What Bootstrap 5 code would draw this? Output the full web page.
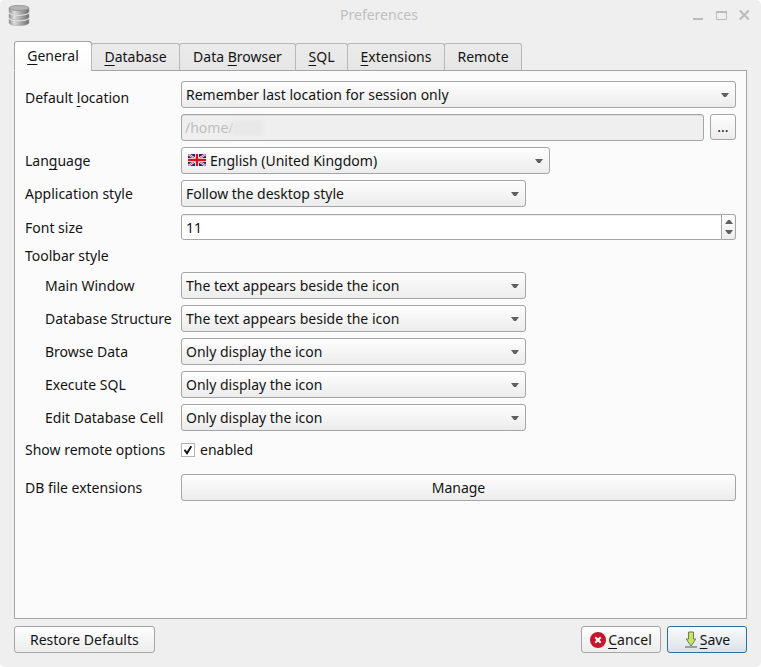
<!DOCTYPE html>
<html lang="en">
<head>
<meta charset="utf-8">
<meta name="viewport" content="width=device-width, initial-scale=1">
<title>Preferences</title>
<link href="https://cdn.jsdelivr.net/npm/bootstrap@5.3.0/dist/css/bootstrap.min.css" rel="stylesheet">
<style>
:root{--edge:#a5a5a5;--face:linear-gradient(#fefefe,#ececec);
 --arrow:url("data:image/svg+xml,%3Csvg xmlns='http://www.w3.org/2000/svg' viewBox='0 0 8 4'%3E%3Cpath d='M0 0h8L5 4H3z' fill='%23606060'/%3E%3C/svg%3E")}
body{background:#fff;color:#141414;font-family:"Noto Sans",sans-serif;font-size:14px;line-height:20px}
.window{background:#efefef;border-radius:5px}
.titlebar{height:41px;padding:5px 11px 0 8px;color:#c0c0c0}
.titlebar>*{flex:1 1 0}
.win-buttons{gap:12px}
.wbtn{border:0;background:none;padding:0;width:11px;height:20px;color:#bcbcbc}
.wbtn svg,.app-icon{display:block}
.frame{padding:0 14px 14px}
u{text-underline-offset:3px;text-decoration-thickness:1px;text-decoration-skip-ink:none}
.pref-tabs{border:0;height:30px;margin-bottom:-1px;position:relative}
.pref-tabs .nav-link{height:28px;padding:0;margin:0 0 0 -1px;border:1px solid #b8b8b8;border-bottom-color:var(--edge);border-radius:3px 3px 0 0;background:linear-gradient(#ebebeb,#e6e6e6);color:#141414}
.pref-tabs .nav-link.active{height:30px;margin:0;border-color:var(--edge);border-bottom-color:#fbfbfb;background:linear-gradient(#fff,#fbfbfb);color:#141414}
.w-general{width:78px}.w-database{width:89px}.w-browser{width:117px}.w-sql{width:53px}.w-ext{width:98px}.w-remote{width:78px}
.pane{background:#fbfbfb;border:1px solid var(--edge);padding:10px}
.stack{display:flex;flex-direction:column;gap:6px}
.line{display:grid;grid-template-columns:156px minmax(0,1fr);align-items:center;min-height:27px}
.line label,.line .caption{white-space:nowrap}
.sub>label{padding-left:20px}
.line-location{align-items:start}
.line-location>label{padding-top:7px}
.line-spin{align-items:end}
.line-spin>label{padding-bottom:2px}
.line-short{min-height:20px}
.line-check{min-height:25px;margin-bottom:6px}
.combo.form-select{height:27px;padding:0 24px 0 4px;border:1px solid var(--edge);border-radius:3px;font-size:14px;line-height:20px;color:#141414;background:var(--arrow) no-repeat right 6px center/8px 4px,var(--face)}
.combo-mid{max-width:345px}
.lang-box{max-width:369px}
.lang-box .combo{padding-left:28px}
.flag{position:absolute;left:7px;top:7px;width:18px;height:12px}
.field.form-control{height:26px;min-height:0;padding:0 4px;border:1px solid var(--edge);border-radius:3px;font-size:14px;line-height:20px;color:#141414;background:#fff;box-shadow:inset 0 1px #eee}
.field.path{height:27px;padding-left:3px;background:#efefef;color:#bebebe;box-shadow:inset 0 1px #dcdcdc}
.path-row,.footer-buttons{gap:6px}
.smudge{position:absolute;left:50px;top:7px;width:32px;height:14px;background:#e8e8e8;filter:blur(2px)}
.push.btn{height:27px;padding:0 15px;border:1px solid var(--edge);border-radius:3px;background:var(--face);font-size:14px;line-height:20px;color:#141414}
.push.btn.more{width:26px;height:26px;padding:0}
.push.btn.cancel{width:80px;padding:0}
.push.btn.save{width:80px;padding:0;border-color:#2a6f9e;background:linear-gradient(#f9fbfc,#dbe2e8)}
.footer-buttons{padding-top:7px}
.icon-text{margin-left:2px}
.spin .field{border-radius:3px 0 0 3px;appearance:textfield;-moz-appearance:textfield}
.spin .field::-webkit-inner-spin-button{appearance:none;margin:0}
.steps{width:14px;flex:none;border:1px solid var(--edge);border-left:0;border-radius:0 3px 3px 0;background:var(--face);padding:2px 0}
.steps button{flex:1;display:flex;align-items:center;justify-content:center;border:0;padding:0;background:none}
.tick.form-check-input{width:14px;height:14px;margin:0;border:1px solid #b3b3b3;border-radius:0;background-color:#fff}
.tick.form-check-input:checked{background:#fff url("data:image/svg+xml,%3Csvg xmlns='http://www.w3.org/2000/svg' viewBox='0 0 12 12'%3E%3Cpath d='M2.500 5.800 5 9.300 9.300 2.200' fill='none' stroke='%23111' stroke-width='1.900'/%3E%3C/svg%3E") center/12px 12px no-repeat;border-color:#b3b3b3}
.tick-label{padding-left:5px}
</style>
</head>
<body>
<main class="window min-vh-100 d-flex flex-column">
  <header class="titlebar d-flex align-items-start">
    <div>
      <svg class="app-icon" width="23" height="22" viewBox="0 0 23 22" aria-hidden="true">
        <defs><linearGradient id="metal"><stop offset="0" stop-color="#8c8c8c"/><stop offset=".25" stop-color="#dedede"/><stop offset=".6" stop-color="#a8a8a8"/><stop offset="1" stop-color="#6c6c6c"/></linearGradient></defs>
        <g fill="url(#metal)" stroke="#aaa" stroke-width=".6">
          <path d="M1 14v4c0 3.400 20 3.400 20 0v-4z"/>
          <path d="M1 8.500v4c0 3.400 20 3.400 20 0v-4z"/>
          <path d="M1 3v4c0 3.400 20 3.400 20 0V3z"/>
        </g>
        <path d="M1 8c2 3 18 3 20 0M1 13.500c2 3 18 3 20 0" fill="none" stroke="#e8e8e8"/>
        <ellipse cx="11" cy="3" rx="10" ry="2.600" fill="#b4b4b4" stroke="#8f8f8f" stroke-width=".8"/>
      </svg>
    </div>
    <div class="text-center">Preferences</div>
    <div class="win-buttons d-flex justify-content-end">
      <button class="wbtn" type="button" aria-label="Minimize"><svg width="11" height="20" viewBox="0 0 11 20"><path d="M0 13h10v2H0z" fill="currentColor"/></svg></button>
      <button class="wbtn" type="button" aria-label="Maximize"><svg width="11" height="20" viewBox="0 0 11 20"><path d="M.5 6.500h10v8H.5z" fill="none" stroke="currentColor"/><path d="M0 6h11v2H0z" fill="currentColor"/></svg></button>
      <button class="wbtn" type="button" aria-label="Close"><svg width="11" height="20" viewBox="0 0 11 20"><path d="m.8 5.500 9 9m0-9-9 9" stroke="currentColor" stroke-width="2.200"/></svg></button>
    </div>
  </header>
  <div class="frame flex-grow-1 d-flex flex-column">
    <ul class="nav nav-tabs pref-tabs align-items-end" role="tablist">
      <li role="presentation"><button type="button" role="tab" aria-selected="true" class="nav-link active w-general"><u>G</u>eneral</button></li>
      <li role="presentation"><button type="button" role="tab" class="nav-link w-database"><u>D</u>atabase</button></li>
      <li role="presentation"><button type="button" role="tab" class="nav-link w-browser">Data <u>B</u>rowser</button></li>
      <li role="presentation"><button type="button" role="tab" class="nav-link w-sql"><u>S</u>QL</button></li>
      <li role="presentation"><button type="button" role="tab" class="nav-link w-ext"><u>E</u>xtensions</button></li>
      <li role="presentation"><button type="button" role="tab" class="nav-link w-remote">Remote</button></li>
    </ul>
    <form class="pane flex-grow-1 stack" id="prefs">
      <div class="line line-location">
        <label for="loc">Default <u>l</u>ocation</label>
        <div class="stack">
          <select class="form-select combo" id="loc"><option>Remember last location for session only</option></select>
          <div class="path-row d-flex">
            <div class="position-relative flex-grow-1">
              <input class="form-control field path" type="text" value="/home/" aria-label="Default path" disabled>
              <span class="smudge"></span>
            </div>
            <button class="btn push more" type="button">...</button>
          </div>
        </div>
      </div>
      <div class="line">
        <label for="lang">Lan<u>g</u>uage</label>
        <div class="position-relative lang-box">
          <select class="form-select combo" id="lang"><option>English (United Kingdom)</option></select>
          <svg class="flag" viewBox="0 0 18 12" aria-hidden="true">
            <path d="M0 0h18v12H0z" fill="#23277d"/>
            <path d="m0 0 18 12M18 0 0 12" stroke="#fff" stroke-width="2.200"/>
            <path d="m0 0 18 12M18 0 0 12" stroke="#d22" stroke-width=".8"/>
            <path d="M9 0v12M0 6h18" stroke="#fff" stroke-width="4"/>
            <path d="M9 0v12M0 6h18" stroke="#d8101c" stroke-width="2.400"/>
          </svg>
        </div>
      </div>
      <div class="line">
        <label for="style">Application style</label>
        <select class="form-select combo combo-mid" id="style"><option>Follow the desktop style</option></select>
      </div>
      <div class="line line-spin">
        <label for="size">Font size</label>
        <div class="d-flex spin">
          <input class="form-control field" type="number" id="size" value="11">
          <div class="steps d-flex flex-column">
            <button type="button" aria-label="Increase"><svg width="8" height="4" viewBox="0 0 8 4"><path d="M0 4h8L5 0H3z" fill="#606060"/></svg></button>
            <button type="button" aria-label="Decrease"><svg width="8" height="4" viewBox="0 0 8 4"><path d="M0 0h8L5 4H3z" fill="#606060"/></svg></button>
          </div>
        </div>
      </div>
      <div class="line line-short"><span class="caption">Toolbar style</span></div>
      <div class="line sub">
        <label for="t1">Main Window</label>
        <select class="form-select combo combo-mid" id="t1"><option>The text appears beside the icon</option></select>
      </div>
      <div class="line sub">
        <label for="t2">Database Structure</label>
        <select class="form-select combo combo-mid" id="t2"><option>The text appears beside the icon</option></select>
      </div>
      <div class="line sub">
        <label for="t3">Browse Data</label>
        <select class="form-select combo combo-mid" id="t3"><option>Only display the icon</option></select>
      </div>
      <div class="line sub">
        <label for="t4">Execute SQL</label>
        <select class="form-select combo combo-mid" id="t4"><option>Only display the icon</option></select>
      </div>
      <div class="line sub">
        <label for="t5">Edit Database Cell</label>
        <select class="form-select combo combo-mid" id="t5"><option>Only display the icon</option></select>
      </div>
      <div class="line line-check">
        <span class="caption">Show remote options</span>
        <div class="d-flex align-items-center">
          <input class="form-check-input tick" type="checkbox" id="remote" checked>
          <label class="tick-label" for="remote">enabled</label>
        </div>
      </div>
      <div class="line">
        <span class="caption">DB file extensions</span>
        <button class="btn push" type="button">Manage</button>
      </div>
    </form>
    <footer class="footer-buttons d-flex">
      <button class="btn push me-auto" type="reset" form="prefs">Restore Defaults</button>
      <button class="btn push cancel d-flex align-items-center justify-content-center" type="button">
        <svg width="16" height="16" viewBox="0 0 16 16" aria-hidden="true"><circle cx="8" cy="8" r="8" fill="#c9142b"/><path d="m5.300 5.300 5.400 5.400m0-5.400-5.400 5.400" stroke="#fff" stroke-width="2"/></svg>
        <span class="icon-text"><u>C</u>ancel</span>
      </button>
      <button class="btn push save d-flex align-items-center justify-content-center" type="submit" form="prefs">
        <svg width="14" height="17" viewBox="0 0 14 17" aria-hidden="true"><path d="M4.500 1h5v7h2.300L7 15 2.200 8h2.300z" fill="#c8e65a" stroke="#6b7a6b"/><path d="M1 16h12" stroke="#555"/></svg>
        <span class="icon-text"><u>S</u>ave</span>
      </button>
    </footer>
  </div>
</main>
<script src="https://cdn.jsdelivr.net/npm/bootstrap@5.3.0/dist/js/bootstrap.bundle.min.js"></script>
</body>
</html>
